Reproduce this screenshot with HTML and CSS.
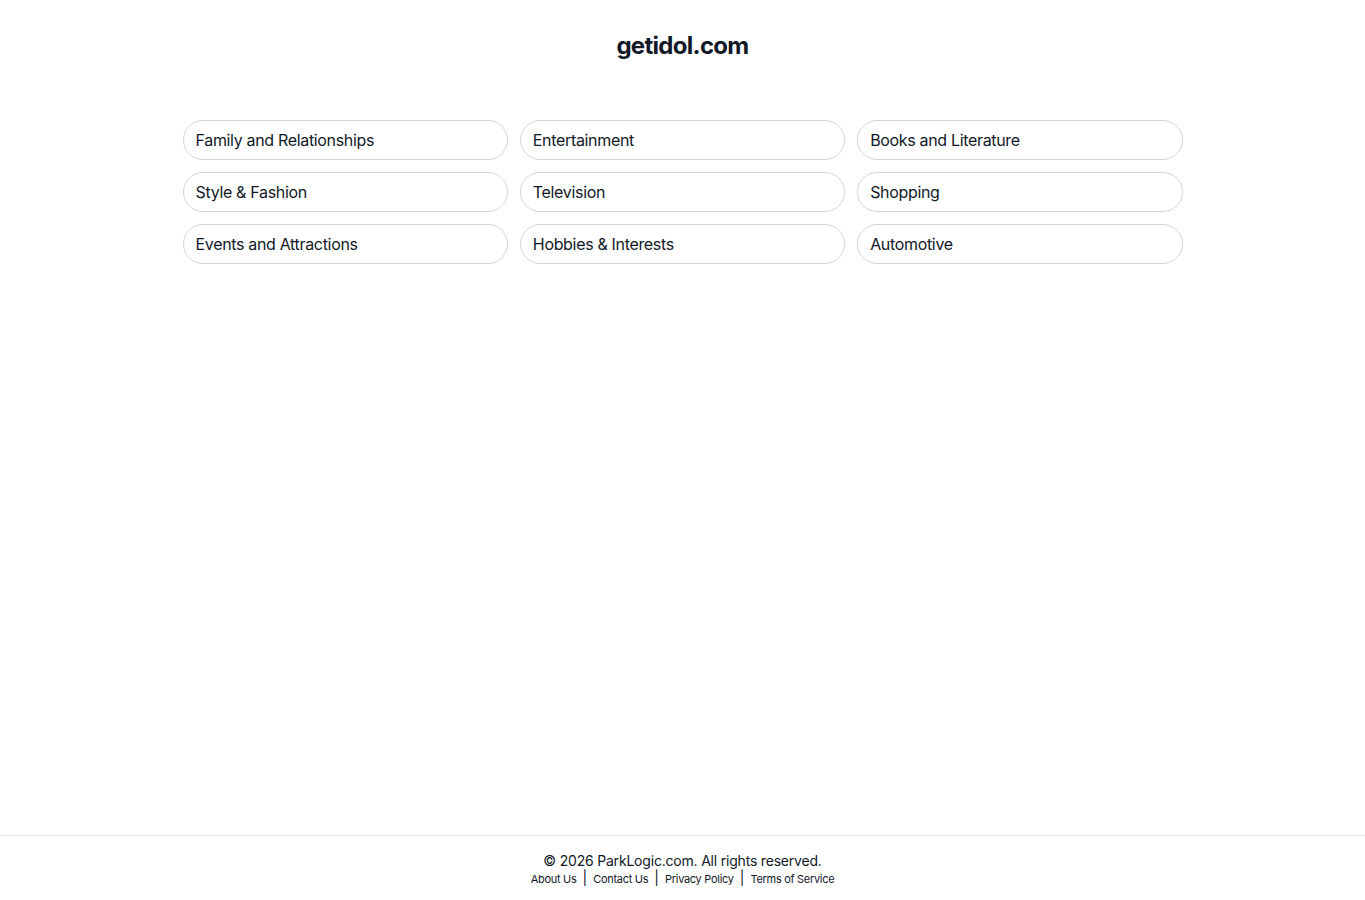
FILE: index.html
```html
<!DOCTYPE html>
<html lang="en">
<head>
    <meta charset="UTF-8">
    <meta name="viewport" content="width=device-width, initial-scale=1.0">
    <title>getidol.com</title>
    <link rel="stylesheet" href="styles.css">
</head>
<body>
    <main class="page">
        <h1 class="site-title">getidol.com</h1>
        <div class="topics">
            <a href="#" class="topic">Family and Relationships</a>
            <a href="#" class="topic">Entertainment</a>
            <a href="#" class="topic">Books and Literature</a>
            <a href="#" class="topic">Style &amp; Fashion</a>
            <a href="#" class="topic">Television</a>
            <a href="#" class="topic">Shopping</a>
            <a href="#" class="topic">Events and Attractions</a>
            <a href="#" class="topic">Hobbies &amp; Interests</a>
            <a href="#" class="topic">Automotive</a>
        </div>
    </main>
    <footer class="footer">
        <p class="copyright">&copy; 2026 ParkLogic.com. All rights reserved.</p>
        <nav class="footer-links">
            <a href="#">About Us</a>
            <span class="sep">|</span>
            <a href="#">Contact Us</a>
            <span class="sep">|</span>
            <a href="#">Privacy Policy</a>
            <span class="sep">|</span>
            <a href="#">Terms of Service</a>
        </nav>
    </footer>
</body>
</html>
```

FILE: styles.css
```css
body {
    font-family: Inter, "Noto Sans", Arial, sans-serif;
    margin: 0;
    padding: 0;
    background-color: #fff;
    color: #111827;
    min-height: 100vh;
    display: flex;
    flex-direction: column;
}
.page {
    flex: 1;
    width: 1000px;
    margin: 0 auto;
}
.site-title {
    text-align: center;
    font-size: 24px;
    line-height: 32px;
    font-weight: 700;
    letter-spacing: -0.7px;
    margin: 30px 0 58px;
}
.topics {
    display: grid;
    grid-template-columns: repeat(3, 1fr);
    gap: 12px;
}
.topic {
    display: flex;
    align-items: center;
    height: 40px;
    box-sizing: border-box;
    padding: 0 12px;
    border: 1px solid #d1d5db;
    border-radius: 9999px;
    color: #111827;
    text-decoration: none;
    font-size: 16px;
    letter-spacing: -0.33px;
}
.topic:hover {
    background-color: #f9fafb;
}
.footer {
    border-top: 1px solid #e5e7eb;
    height: 65px;
    box-sizing: border-box;
    padding-top: 16px;
    text-align: center;
}
.copyright {
    margin: 0;
    font-size: 14px;
    line-height: 18px;
    letter-spacing: -0.2px;
}
.footer-links {
    font-size: 11px;
    line-height: 16px;
}
.footer-links a {
    color: #111827;
    text-decoration: none;
    letter-spacing: -0.3px;
}
.sep {
    font-size: 14px;
    color: #111827;
    margin: 0 3px;
}
```
